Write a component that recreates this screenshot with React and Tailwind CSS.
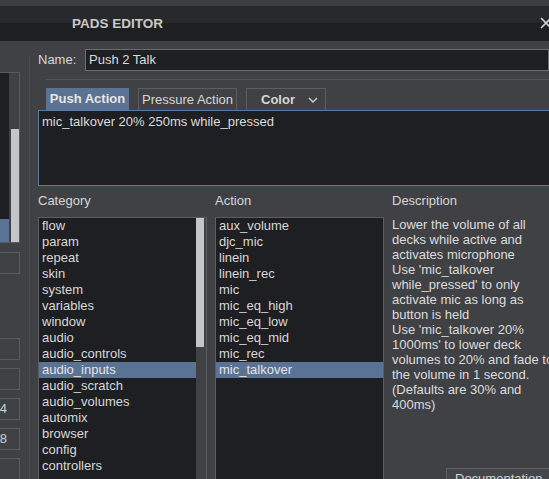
import React from 'react';

const categories = [
  'flow', 'param', 'repeat', 'skin', 'system', 'variables', 'window', 'audio',
  'audio_controls', 'audio_inputs', 'audio_scratch', 'audio_volumes', 'automix',
  'browser', 'config', 'controllers',
];

const actions = [
  'aux_volume', 'djc_mic', 'linein', 'linein_rec', 'mic', 'mic_eq_high',
  'mic_eq_low', 'mic_eq_mid', 'mic_rec', 'mic_talkover',
];

const description = [
  'Lower the volume of all',
  'decks while active and',
  'activates microphone',
  "Use 'mic_talkover",
  "while_pressed' to only",
  'activate mic as long as',
  'button is held',
  "Use 'mic_talkover 20%",
  "1000ms' to lower deck",
  'volumes to 20% and fade to',
  'the volume in 1 second.',
  '(Defaults are 30% and',
  '400ms)',
];

function ListBox({ items, selected, scrollbar }) {
  return (
    <div className="flex h-[270px] border border-[#5c5d61] bg-[#1e1f22]">
      <ul className="min-w-0 flex-1">
        {items.map((item) => (
          <li
            key={item}
            className={[
              'h-4 truncate pl-[3px] leading-4',
              item === selected ? 'bg-[#5a7294] text-[#e4e4e4]' : 'text-[#d8d8d8]',
            ].join(' ')}
          >
            {item}
          </li>
        ))}
      </ul>
      {scrollbar && (
        <div className="w-[10px] shrink-0 bg-[#404145]">
          <div className="h-[129px] w-[8px] bg-[#c4c5c9]" />
        </div>
      )}
    </div>
  );
}

function SideButton({ label }) {
  return (
    <div className="flex h-[22px] w-[20px] items-center justify-end overflow-hidden border-y border-r border-[#5a5b5f] pr-[12px] text-[#cfcfcf]">
      <span className="whitespace-nowrap">{label}</span>
    </div>
  );
}

export default function App() {
  return (
    <div className="h-[479px] w-[549px] overflow-hidden bg-[#404145] font-['Liberation_Sans',Arial,sans-serif] text-[13px] text-[#d6d6d6]">
      {/* title bar */}
      <div className="flex h-[41px] items-center justify-between bg-[linear-gradient(to_bottom,#3c3d41_0_6px,#28292c_6px_23px,#1e1f21_23px)] pt-[7px]">
        <span className="pl-[72px] text-[13.5px] font-bold text-[#c9c9c9]">PADS EDITOR</span>
        <svg width="12" height="12" viewBox="0 0 12 12" className="mr-[-3px] mt-[-3px]">
          <path d="M1 1 L11 11 M11 1 L1 11" stroke="#d0d0d0" strokeWidth="1.6" />
        </svg>
      </div>

      <div className="flex h-[438px]">
        {/* left cut-off panel */}
        <div className="flex w-[29px] shrink-0 flex-col pt-[31px]">
          <div className="flex h-[181px] w-[20px] border-y border-r border-[#5a5b5f]">
            <div className="flex w-[9px] flex-col justify-end bg-[#1e1f22]">
              <div className="h-[23px] bg-[#5a7294]" />
            </div>
            <div className="flex-1 pl-[2px] pt-[56px]">
              <div className="h-[113px] w-[8px] bg-[#c4c5c9]" />
            </div>
          </div>
          <div className="mt-[9px]">
            <SideButton label="" />
          </div>
          <div className="mt-[33px] h-px w-[13px] bg-[#55565a]" />
          <div className="mt-[31px] flex flex-col gap-[8px]">
            <SideButton label="" />
            <SideButton label="" />
            <SideButton label="P4" />
            <SideButton label="P8" />
            <SideButton label="" />
          </div>
        </div>
        <div className="mt-[14px] w-px shrink-0 bg-[#4b4c50]" />

        {/* main editor */}
        <div className="min-w-0 flex-1 pl-[8px]">
          <div className="mt-[8px] flex items-center">
            <span className="w-[47px] shrink-0">Name:</span>
            <div className="flex h-[22px] flex-1 items-center border border-[#6c6d70] bg-[#1e1f22] pl-[3px] text-[#dcdcdc]">
              Push 2 Talk
            </div>
          </div>

          <div className="ml-[8px] mt-[8px] h-px bg-[#55565a]" />

          <div className="mt-[8px] flex gap-[9px] pl-[8px]">
            <div className="flex h-[22px] w-[83px] items-center justify-center bg-[#5a7294] font-bold text-[#e6e6e6]">
              Push Action
            </div>
            <div className="flex h-[22px] w-[99px] items-center justify-center border border-b-0 border-[#5c5d61]">
              Pressure Action
            </div>
            <div className="flex h-[22px] w-[80px] items-center justify-between border border-b-0 border-[#5c5d61] pl-[14px] pr-[7px] font-bold">
              Color
              <svg width="10" height="6" viewBox="0 0 10 6">
                <path d="M1 1 L5 5 L9 1" fill="none" stroke="#d0d0d0" strokeWidth="1.4" />
              </svg>
            </div>
          </div>

          <div className="h-[76px] border border-r-0 border-[#587aa3] bg-[#1e1f22] pl-[3px] pt-[1px] text-[#dcdcdc]">
            mic_talkover 20% 250ms while_pressed
          </div>

          <div className="mt-[7px] grid grid-cols-[169px_169px_1fr] gap-[8px]">
            <div>
              <div className="mb-[8px] h-4 leading-4">Category</div>
              <ListBox items={categories} selected="audio_inputs" scrollbar />
            </div>
            <div>
              <div className="mb-[8px] h-4 leading-4">Action</div>
              <ListBox items={actions} selected="mic_talkover" />
            </div>
            <div className="flex flex-col">
              <div className="mb-[8px] h-4 leading-4">Description</div>
              <div className="whitespace-nowrap leading-[15px] text-[#dcdcdc]">
                {description.map((line) => (
                  <div key={line}>{line}</div>
                ))}
              </div>
              <div className="ml-[54px] mt-[56px] flex h-[22px] items-center whitespace-nowrap border border-[#5e5f63] bg-[#45464a] pl-[8px]">
                Documentation
              </div>
            </div>
          </div>
        </div>
      </div>
    </div>
  );
}
